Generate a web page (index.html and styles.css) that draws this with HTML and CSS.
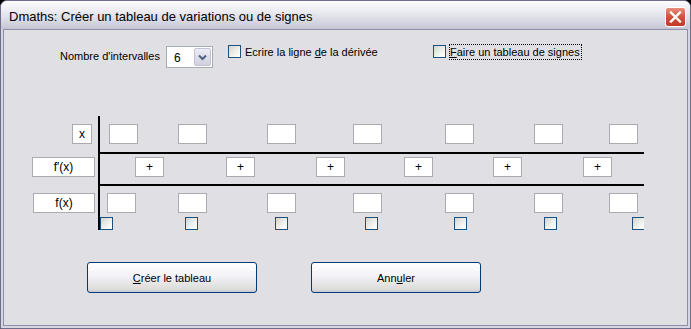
FILE: index.html
```html
<!DOCTYPE html>
<html lang="fr">
<head>
  <meta charset="UTF-8">
  <title>Dmaths</title>
  <link rel="stylesheet" href="styles.css">
</head>
<body>

  <div class="window">
    <div class="titlebar">
      <span class="title">Dmaths: Créer un tableau de variations ou de signes</span>
      <button class="close" aria-label="Fermer">
        <svg width="19" height="18" viewBox="0 0 19 18">
          <path d="M5 4.5 L14 13.5 M14 4.5 L5 13.5" stroke="#fff" stroke-width="2.4" stroke-linecap="square" fill="none"/>
        </svg>
      </button>
    </div>

    <div class="client">
      <!-- options -->
      <div class="options">
        <span class="field-label">Nombre d'intervalles</span>
        <div class="select">
          <span class="select-value">6</span>
          <span class="select-btn">
            <svg width="15" height="18" viewBox="0 0 15 18">
              <path d="M4 7.5 L7.5 11 L11 7.5" stroke="#4d6185" stroke-width="2" fill="none"/>
            </svg>
          </span>
        </div>
        <label class="check-opt opt-deriv">
          <span class="checkbox"></span>
          <span class="check-text">Ecrire la ligne <u>d</u>e la dérivée</span>
        </label>
        <label class="check-opt">
          <span class="checkbox"></span>
          <span class="check-text focused"><u>F</u>aire un tableau de signes</span>
        </label>
      </div>

      <!-- tableau -->
      <div class="variations">
        <div class="tab-row row-x">
          <div class="lbl-col"><span class="box lbl lbl-x">x</span></div>
          <div class="track">
            <div class="cells cells-x">
              <span class="box"></span><span class="box"></span><span class="box"></span><span class="box"></span>
              <span class="box"></span><span class="box"></span><span class="box"></span>
            </div>
          </div>
        </div>

        <div class="tab-row row-fp">
          <div class="lbl-col"><span class="box lbl lbl-fp">f'(x)</span></div>
          <div class="track">
            <div class="cells cells-fp">
              <span class="box">+</span><span class="box">+</span><span class="box">+</span>
              <span class="box">+</span><span class="box">+</span><span class="box">+</span>
            </div>
          </div>
        </div>

        <div class="tab-row row-f">
          <div class="lbl-col"><span class="box lbl lbl-f">f(x)</span></div>
          <div class="track">
            <div class="cells cells-f">
              <span class="box"></span><span class="box"></span><span class="box"></span><span class="box"></span>
              <span class="box"></span><span class="box"></span><span class="box"></span>
            </div>
            <div class="checks">
              <span class="checkbox"></span><span class="checkbox"></span><span class="checkbox"></span><span class="checkbox"></span>
              <span class="checkbox"></span><span class="checkbox"></span><span class="checkbox"></span>
            </div>
          </div>
        </div>
      </div>

      <div class="actions">
        <button class="btn"><u>C</u>réer le tableau</button>
        <button class="btn">Ann<u>u</u>ler</button>
      </div>
    </div>
  </div>

</body>
</html>
```

FILE: styles.css
```css
* {
  box-sizing: border-box;
}

body {
  margin: 0;
  background-color: #000;
  font-family: 'Liberation Sans', Arial, sans-serif;
  font-size: 11px;
  color: #000;
}

.window {
  width: 691px;
  height: 329px;
  display: flex;
  flex-direction: column;
  background-color: #d6d6e2;
  border: 1px solid #6e6e8c;
  border-radius: 7px 7px 0 0;
  overflow: hidden;
}

/* title bar */
.titlebar {
  height: 28px;
  display: flex;
  align-items: flex-start;
  justify-content: space-between;
  padding: 0 4px 0 8px;
  background: linear-gradient(#fdfdfe, #ececf2 35%, #d9d9e4 70%, #c4c4d3);
}

.title {
  font-family: 'Liberation Sans', Arial, sans-serif;
  font-size: 13px;
  line-height: 16px;
  margin-top: 8px;
  color: #000;
}

.close {
  width: 21px;
  height: 20px;
  margin-top: 6px;
  padding: 0;
  border: 1px solid #fff;
  border-radius: 3px;
  background: linear-gradient(#e88d7c, #d1513e 50%, #c03a28);
  display: flex;
  align-items: center;
  justify-content: center;
}

.client {
  flex: 1;
  margin: 0 2px 2px 2px;
  background-color: #e0dfe3;
  border: 1px solid #8e8ea8;
}

/* options */
.options {
  display: flex;
  align-items: flex-start;
  margin-top: 14px;
  padding-left: 56px;
  height: 24px;
}

.field-label {
  width: 106px;
  margin-top: 5px;
  line-height: 14px;
}

.select {
  width: 47px;
  height: 22px;
  margin-top: 2px;
  display: flex;
  background: white;
  border: 1px solid #a5acb2;
  padding: 1px;
}

.select-value {
  flex: 1;
  padding-left: 6px;
  line-height: 20px;
  font-size: 12px;
}

.select-btn {
  width: 17px;
  display: flex;
  align-items: center;
  justify-content: center;
  border: 1px solid #c2c2d2;
  border-radius: 2px;
  background: linear-gradient(#ececf4, #d0d0e0);
}

.check-opt {
  display: flex;
  align-items: flex-start;
}

.opt-deriv {
  width: 205px;
  margin-left: 15px;
}

.checkbox {
  width: 13px;
  height: 13px;
  flex-shrink: 0;
  border: 1px solid #1c5180;
  background: linear-gradient(135deg, #d4d4ce, #f6f6f4 70%, #fff);
}

.check-opt .checkbox {
  margin-top: 1px;
}

.check-text {
  margin-left: 3px;
  line-height: 14px;
  border: 1px solid transparent;
  padding: 0 1px 0 0;
}

.check-text.focused {
  border: 1px dotted #000;
}

/* tableau de variations */
.variations {
  margin-top: 48px;
}

.tab-row {
  display: flex;
}

.lbl-col {
  width: 94px;
  display: flex;
  justify-content: flex-end;
  align-items: flex-start;
  padding-right: 3px;
}

.track {
  width: 546px;
  border-left: 2px solid #000;
  overflow: hidden;
}

.row-x .track {
  height: 38px;
  border-bottom: 2px solid #000;
}

.row-fp .track {
  height: 32px;
  border-bottom: 2px solid #000;
}

.row-f .track {
  height: 44px;
}

.row-x > div {
  padding-top: 8px;
}

.row-fp > div {
  padding-top: 3px;
}

.row-f > div {
  padding-top: 7px;
}

.box {
  width: 29px;
  height: 20px;
  display: flex;
  align-items: center;
  justify-content: center;
  background: white;
  border: 1px solid #a8abb0;
  font-size: 12px;
}

.lbl-x {
  width: 20px;
  margin-right: 3px;
}

.lbl-fp {
  width: 63px;
}

.lbl-f {
  width: 62px;
}

.cells {
  display: grid;
  justify-items: end;
}

.cells-x {
  grid-template-columns: 38px 69px 89px 86px 92px 89px 75px;
}

.cells-fp {
  grid-template-columns: 64px 91px 90px 88px 89px 90px;
}

.cells-f {
  grid-template-columns: 36px 71px 89px 86px 92px 89px 75px;
}

.checks {
  display: grid;
  justify-items: end;
  margin-top: 4px;
  grid-template-columns: 13px 85px 90px 90px 89px 90px 88px;
}

/* boutons */
.actions {
  display: flex;
  gap: 54px;
  margin-top: 32px;
  padding-left: 83px;
}

.btn {
  width: 170px;
  height: 31px;
  font-family: 'Liberation Sans', Arial, sans-serif;
  font-size: 11px;
  color: #000;
  border: 1px solid #003c74;
  border-radius: 3px;
  background: linear-gradient(#ffffff, #f3f3f8 45%, #dcdcd8 90%, #c8c8dc);
  padding: 0;
}
```
